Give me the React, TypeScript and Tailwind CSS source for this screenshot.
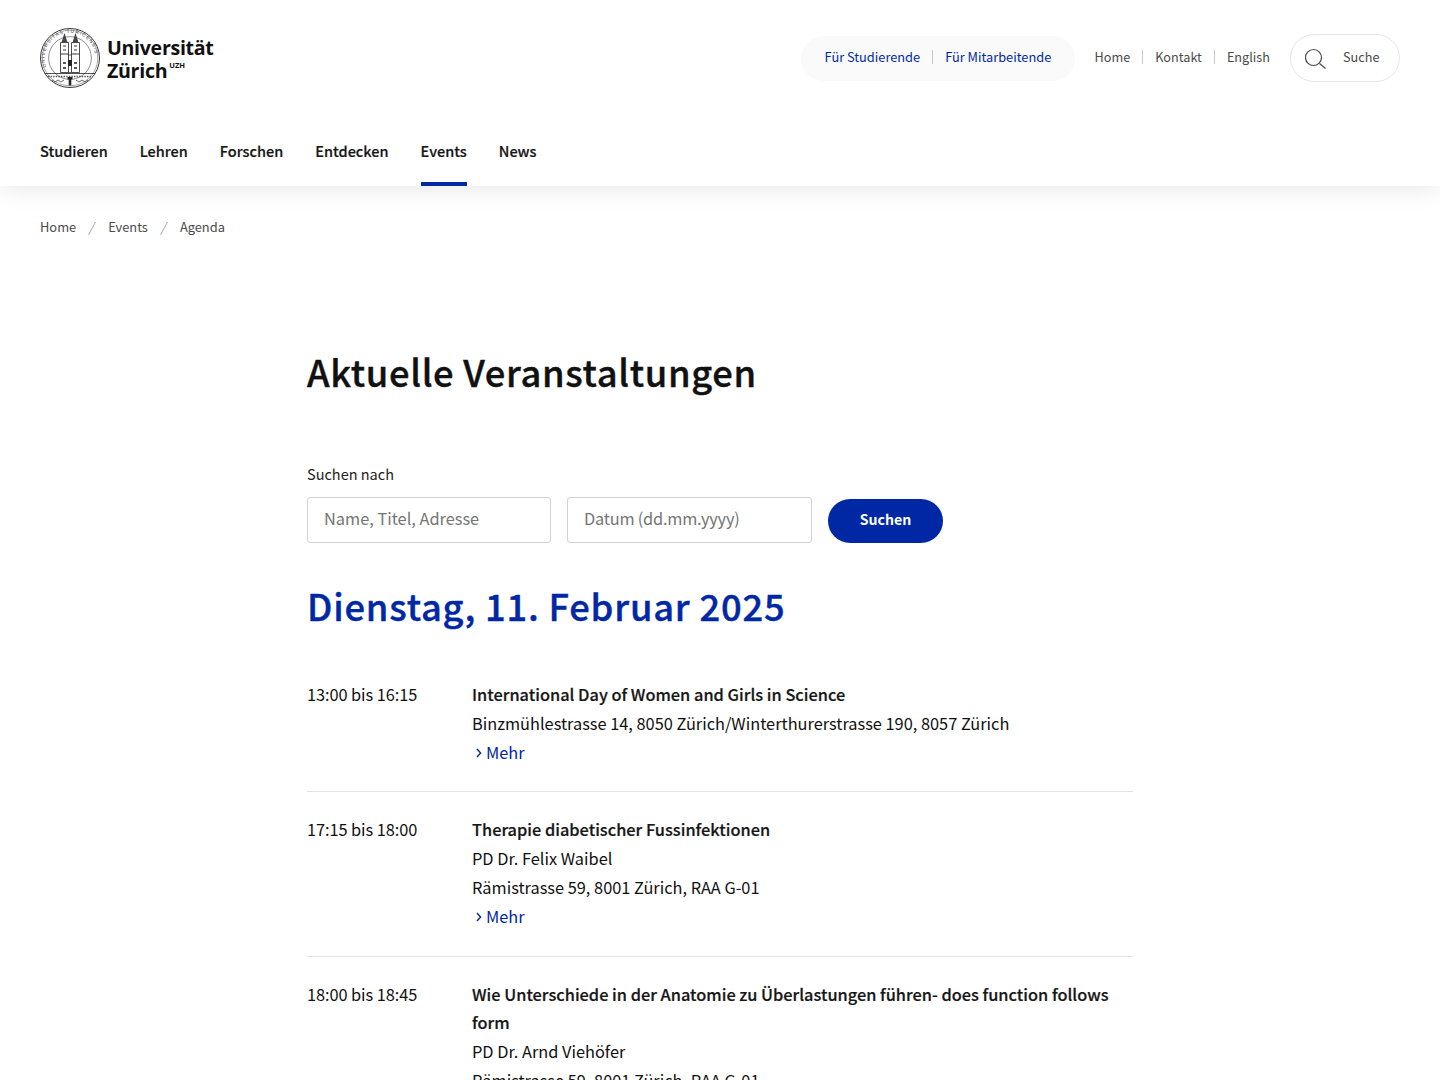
const font = "font-['Noto_Sans_CJK_SC','Noto_Sans',sans-serif]";

function Logo() {
  return (
    <div className="flex items-center">
      <svg width="60" height="60" viewBox="0 0 60 60" fill="none" stroke="#222">
        <defs>
          <path id="ringTop" d="M6.200 39A25.400 25.400 0 1 1 53.800 39" />
        </defs>
        <circle cx="30" cy="30" r="29.500" strokeWidth="0.9" />
        <circle cx="30" cy="30" r="27.800" strokeWidth="0.4" />
        <circle cx="30" cy="30" r="21.400" strokeWidth="0.5" />
        <text fontFamily="Liberation Sans, sans-serif" fontSize="4.800" fill="#444" stroke="none">
          <textPath href="#ringTop" textLength="84" lengthAdjust="spacing">UNIVERSITAS TURICENSIS</textPath>
        </text>
        <path d="M5 45.500h50" strokeWidth="0.8" />
        <path d="M8 48.500h44" strokeWidth="1.400" strokeDasharray="1.400 1.200" opacity="0.8" />
        <path d="M12 52l3 2 3-2 3 2 3-2M36 52l3 2 3-2 3 2 3-2" strokeWidth="0.7" />
        <path d="M20.500 44.500V14.500h8v30zM31.500 44.500V14.500h8v30z" strokeWidth="0.8" fill="#fff" />
        <path d="M21.500 14.500L24.500 5l3 9.500zM32.500 14.500L35.500 5l3 9.500z" fill="#444" stroke="none" />
        <path d="M28.500 27h3v17.500h-3z" strokeWidth="0.7" fill="#fff" />
        <path d="M23 18h3M34 18h3M23 22h3M34 22h3M20.500 26h8M31.500 26h8" strokeWidth="0.900" />
        <path d="M23 35h3M34 35h3M23 40h3M34 40h3" strokeWidth="1.300" />
        <path d="M28 32h4v6h-4z" fill="#222" stroke="none" />
        <path d="M27.500 49h5v2.500h-1.200v6h-2.600v-6h-1.200z" fill="#222" stroke="none" />
      </svg>
      <div className="ml-[7px] mt-[1px] font-['Open_Sans',sans-serif] text-[19.600px] font-bold leading-[23px] tracking-[-0.3px] text-[#111]">
        <div>Universität</div>
        <div className="flex items-start">
          Zürich
          <span className="ml-[2px] mt-[1px] text-[7.500px] font-bold leading-[10px] tracking-normal">UZH</span>
        </div>
      </div>
    </div>
  );
}

function SearchIcon() {
  return (
    <svg width="24" height="24" viewBox="0 0 24 24" fill="none" stroke="#4a4a4a" strokeWidth="1.200">
      <circle cx="8.500" cy="11.500" r="8" />
      <path d="M14.500 17.500l6 5" />
    </svg>
  );
}

function Chevron() {
  return (
    <svg width="8" height="10" viewBox="0 0 8 10" fill="none" stroke="#0028a5" strokeWidth="1.400" className="mx-[3px] mt-[2px]">
      <path d="M2 1l3.600 4L2 9" />
    </svg>
  );
}

function Event({ time, title, lines }: { time: string; title: string; lines: string[] }) {
  return (
    <div className="flex border-b border-[#e3e3e3] pb-[25px] pt-[23px] first:pt-0">
      <div className="w-[165px] shrink-0 leading-[28.800px] tracking-[-0.07px]">{time}</div>
      <div className="flex-1 leading-[28.800px]">
        <div className="font-medium text-[#161616] [-webkit-text-stroke:0.2px_#161616]">{title}</div>
        {lines.map((l) => (
          <div key={l}>{l}</div>
        ))}
        <a className="flex items-center text-[#0028a5]">
          <Chevron />
          Mehr
        </a>
      </div>
    </div>
  );
}

export default function App() {
  return (
    <div className={`${font} h-[1080px] overflow-hidden bg-white text-[#111]`}>
      <header className="relative h-[186px] bg-white shadow-[0_2px_24px_rgba(0,0,0,0.10)]">
        <div className="flex h-[116px] items-center justify-between px-10">
          <Logo />
          <div className="flex items-center text-[12.700px] text-[#4a4a4a]">
            <div className="flex h-[45px] w-[274px] items-center whitespace-nowrap rounded-full bg-[#fafafa] pb-[2px] pl-6 text-[12.800px] text-[#0028a5]">
              <span>Für Studierende</span>
              <span className="mx-3 h-[14px] w-px bg-[#c8c8c8]" />
              <span>Für Mitarbeitende</span>
            </div>
            <div className="ml-5 flex items-center pb-[2px]">
              <span>Home</span>
              <span className="mx-3 h-[14px] w-px bg-[#c8c8c8]" />
              <span>Kontakt</span>
              <span className="mx-3 h-[14px] w-px bg-[#c8c8c8]" />
              <span>English</span>
            </div>
            <div className="ml-5 flex h-12 w-[110px] items-center rounded-full border border-[#e6e6e6] pl-[14px]">
              <SearchIcon />
              <span className="ml-[14px] pb-[2px]">Suche</span>
            </div>
          </div>
        </div>
        <nav className="flex h-[70px] gap-8 px-10 text-[14.500px] font-medium text-[#161616] [-webkit-text-stroke:0.2px_#161616]">
          {["Studieren", "Lehren", "Forschen", "Entdecken", "Events", "News"].map((n) => (
            <a
              key={n}
              className={`flex h-full items-center border-b-4 pt-[3px] ${n === "Events" ? "border-[#0028a5]" : "border-transparent"}`}
            >
              {n}
            </a>
          ))}
        </nav>
      </header>

      <div className="flex h-[84px] items-center px-10 pb-[3px] text-[12.850px] text-[#4a4a4a]">
        <span>Home</span>
        <svg width="32" height="16" viewBox="0 0 32 16" stroke="#aaa" fill="none" className="mt-[2px]"><path d="M12.500 15L19.500 2" /></svg>
        <span>Events</span>
        <svg width="32" height="16" viewBox="0 0 32 16" stroke="#aaa" fill="none" className="mt-[2px]"><path d="M12.500 15L19.500 2" /></svg>
        <span>Agenda</span>
      </div>

      <main className="ml-[307px] w-[826px] text-[16.350px]">
        <h1 className="mt-[73px] text-[36.300px] font-medium leading-[56px] tracking-[0.66px] text-[#111] [-webkit-text-stroke:0.4px_#111]">Aktuelle Veranstaltungen</h1>
        <label className="mt-[63px] block text-[14.500px] leading-[24px] text-[#222]">Suchen nach</label>
        <div className="mt-[11px] flex items-center gap-4">
          <input
            placeholder="Name, Titel, Adresse"
            className="h-[46px] w-[244px] rounded-[3px] border border-[#d2d2d2] px-4 pb-[4px] text-[16.350px] placeholder:text-[#757575]"
          />
          <input
            placeholder="Datum (dd.mm.yyyy)"
            className="h-[46px] w-[245px] rounded-[3px] border border-[#d2d2d2] px-4 pb-[4px] text-[16.350px] tracking-[-0.22px] placeholder:text-[#757575]"
          />
          <button className="mt-[2px] h-[44px] w-[115px] rounded-full bg-[#0028a5] pb-[2px] text-[14.100px] font-semibold text-white">Suchen</button>
        </div>
        <h2 className="mt-[34px] text-[36.300px] font-medium leading-[56px] tracking-[0.8px] text-[#0028a5] [-webkit-text-stroke:0.4px_#0028a5]">Dienstag, 11. Februar 2025</h2>
        <div className="mt-[47px]">
          <Event
            time="13:00 bis 16:15"
            title="International Day of Women and Girls in Science"
            lines={["Binzmühlestrasse 14, 8050 Zürich/Winterthurerstrasse 190, 8057 Zürich"]}
          />
          <Event
            time="17:15 bis 18:00"
            title="Therapie diabetischer Fussinfektionen"
            lines={["PD Dr. Felix Waibel", "Rämistrasse 59, 8001 Zürich, RAA G-01"]}
          />
          <Event
            time="18:00 bis 18:45"
            title="Wie Unterschiede in der Anatomie zu Überlastungen führen- does function follows form"
            lines={["PD Dr. Arnd Viehöfer", "Rämistrasse 59, 8001 Zürich, RAA G-01"]}
          />
        </div>
      </main>
    </div>
  );
}
